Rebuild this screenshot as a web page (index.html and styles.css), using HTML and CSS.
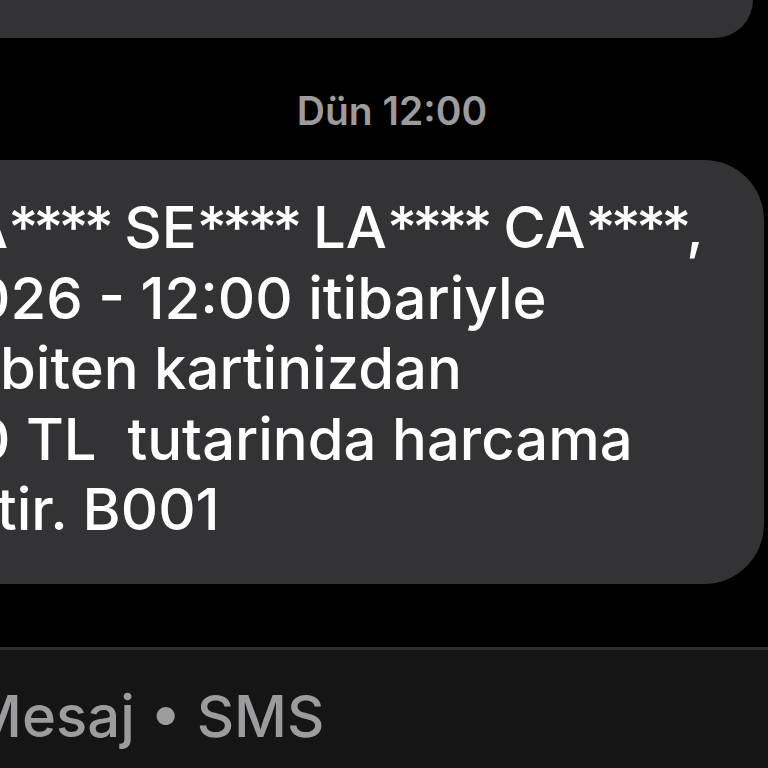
FILE: index.html
```html
<!DOCTYPE html>
<html>
<head>
<meta charset="utf-8">
<link rel="stylesheet" href="styles.css">
</head>
<body>
<div class="screen">
  <div class="bubble bubble-top"></div>
  <div class="stamp">Dün 12:00</div>
  <div class="bubble bubble-main">
    <div class="line l1">A<span class="mask">****</span> SE<span class="mask">****</span> LA<span class="mask">****</span> CA<span class="mask">****</span>,</div>
    <div class="line l2">026 - 12:00 itibariyle</div>
    <div class="line l3">biten kartinizdan</div>
    <div class="line l4">0 TL  tutarinda harcama</div>
    <div class="line l5">tir. B001</div>
  </div>
  <div class="spacer"></div>
  <div class="composer">
    <div class="field">Mesaj • SMS</div>
  </div>
</div>
</body>
</html>
```

FILE: styles.css
```css
html, body {
  margin: 0;
  padding: 0;
  background: #000;
  width: 768px;
  height: 768px;
  overflow: hidden;
}
.screen {
  width: 768px;
  height: 768px;
  display: flex;
  flex-direction: column;
  font-family: "Inter", "Liberation Sans", sans-serif;
}
.bubble {
  background: #333335;
}
.bubble-top {
  height: 38px;
  margin-left: -100px;
  margin-right: 15px;
  border-radius: 0 0 56px 0;
}
.stamp {
  margin-top: 53px;
  height: 40px;
  padding-left: 16px;
  text-align: center;
  color: #9c9c9e;
  font-size: 39px;
  font-weight: 600;
  line-height: 40px;
}
.bubble-main {
  margin-top: 29px;
  margin-left: -100px;
  margin-right: 4px;
  height: 424px;
  border-radius: 60px;
  padding: 32px 0 0 100px;
  box-sizing: border-box;
  color: #fff;
  font-size: 58px;
  font-weight: 500;
  line-height: 70.5px;
}
.line {
  white-space: pre;
}
.mask {
  letter-spacing: -5px;
}
.l1 { margin-left: -33px; }
.l2 { margin-left: -27px; }
.l3 { margin-left: 0px; }
.l4 { margin-left: -27px; }
.l5 { margin-left: -3px; }
.spacer {
  flex: 1;
}
.composer {
  height: 121px;
  box-sizing: border-box;
  border-top: 3px solid #2e2e30;
  background: #151515;
  padding-top: 31px;
}
.field {
  color: #9c9c9e;
  font-size: 58px;
  font-weight: 500;
  line-height: 70px;
  margin-left: -31px;
}
```
